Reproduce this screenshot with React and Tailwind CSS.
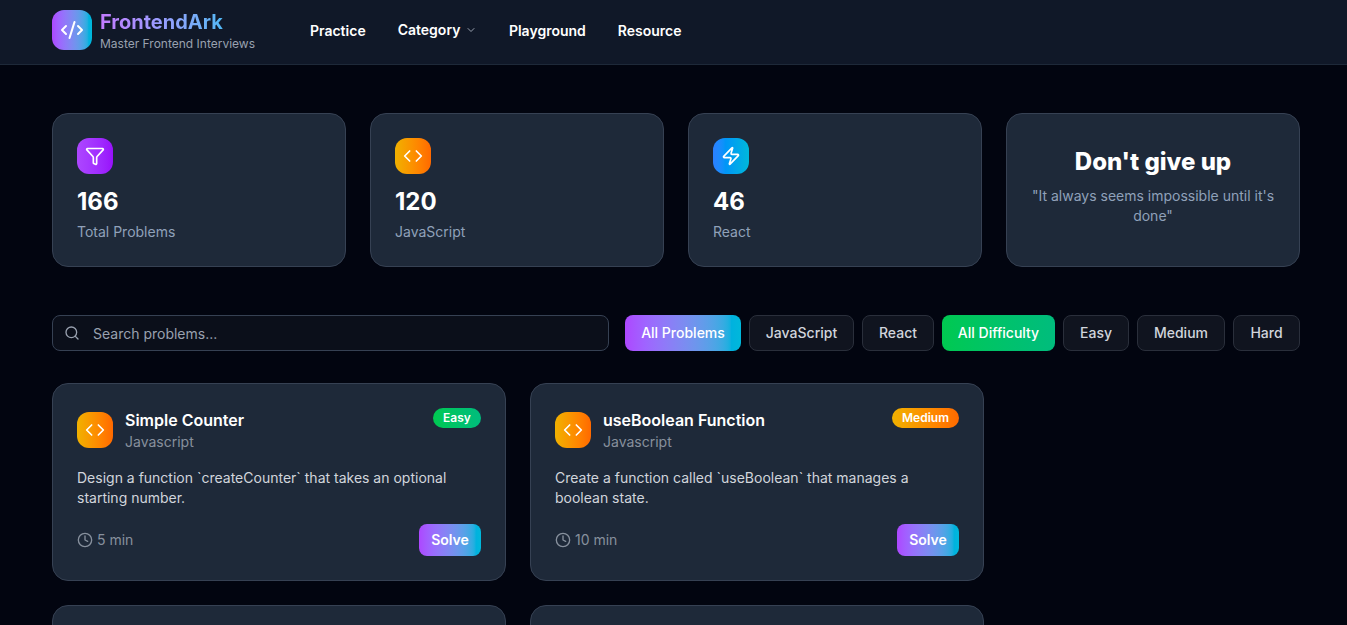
import { Search, ChevronDown, Funnel, Code, Zap, Clock, CodeXml } from 'lucide-react';

const stats = [
  { value: '166', label: 'Total Problems', Icon: Funnel, grad: 'from-purple-500 to-purple-600' },
  { value: '120', label: 'JavaScript', Icon: Code, grad: 'from-yellow-500 to-orange-500' },
  { value: '46', label: 'React', Icon: Zap, grad: 'from-blue-500 to-cyan-500' },
];

const filters = [
  { label: 'All Problems', cls: 'w-[116px] bg-gradient-to-r from-purple-500 to-cyan-500 bg-origin-border text-white border-transparent' },
  { label: 'JavaScript', cls: 'w-[105px]' },
  { label: 'React', cls: 'w-[72px]' },
  { label: 'All Difficulty', cls: 'w-[113px] bg-gradient-to-r from-green-500 to-emerald-500 bg-origin-border text-white border-transparent' },
  { label: 'Easy', cls: 'w-[66px]' },
  { label: 'Medium', cls: 'w-[88px]' },
  { label: 'Hard', cls: 'w-[67px]' },
];

const problems = [
  {
    title: 'Simple Counter',
    desc: 'Design a function `createCounter` that takes an optional starting number.',
    level: 'Easy',
    levelCls: 'w-[48px] bg-gradient-to-r from-green-500 to-emerald-500',
    time: '5 min',
  },
  {
    title: 'useBoolean Function',
    desc: 'Create a function called `useBoolean` that manages a boolean state.',
    level: 'Medium',
    levelCls: 'w-[67px] bg-gradient-to-r from-yellow-500 to-orange-500',
    time: '10 min',
  },
];

function ProblemCard({ p }) {
  return (
    <div className="h-[198px] rounded-2xl border border-gray-700 bg-gray-800 px-6 pt-6">
      <div className="flex justify-between">
        <div className="flex items-start gap-3 pt-[2px]">
          <div className="mt-[2px] flex h-9 w-9 items-center justify-center rounded-xl bg-gradient-to-r from-yellow-500 to-orange-500">
            <Code size={20} className="text-white" />
          </div>
          <div>
            <div className="text-base leading-5 font-semibold text-white">{p.title}</div>
            <div className="mt-[2px] text-sm leading-5 text-[#87909d]">Javascript</div>
          </div>
        </div>
        <div className={`flex h-5 items-center justify-center rounded-full text-xs font-semibold text-white ${p.levelCls}`}>
          {p.level}
        </div>
      </div>
      <p className="mt-4 text-sm leading-5 text-gray-300">{p.desc}</p>
      <div className="mt-4 flex items-center justify-between">
        <div className="flex items-center gap-1 text-sm text-[#87909d]">
          <Clock size={16} />
          {p.time}
        </div>
        <button className="h-8 w-[62px] rounded-lg bg-gradient-to-r from-purple-500 to-cyan-500 text-sm font-semibold text-white">
          Solve
        </button>
      </div>
    </div>
  );
}

export default function App() {
  return (
    <div className="h-screen overflow-hidden bg-[#020510] font-['Inter',sans-serif]">
      {/* header */}
      <header className="h-[65px] border-b border-gray-800 bg-gray-900">
        <div className="flex items-center pl-[52px]">
          <div className="mt-[10px] flex h-10 w-10 items-center justify-center self-start rounded-xl bg-gradient-to-r from-purple-500 to-cyan-500">
            <CodeXml size={24} className="text-white" />
          </div>
          <div className="ml-2 mt-[10px] self-start">
            <div className="w-fit bg-gradient-to-r from-purple-400 to-[#4fb8f5] bg-clip-text text-xl leading-6 font-bold text-transparent">
              FrontendArk
            </div>
            <div className="mt-[2px] text-xs leading-4 text-gray-400">Master Frontend Interviews</div>
          </div>
          <nav className="ml-[55px] flex h-[62px] items-center gap-8 text-sm font-semibold text-white">
            <span>Practice</span>
            <span className="-mt-[2px] flex items-center gap-1">
              Category <ChevronDown size={12} className="ml-[0.5px] text-gray-400" />
            </span>
            <span>Playground</span>
            <span>Resource</span>
          </nav>
        </div>
      </header>

      <main className="ml-[52px] w-[1248px] pt-12">
        <div className="grid grid-cols-4 gap-6">
          {stats.map(({ value, label, Icon, grad }) => (
            <div key={label} className="h-[154px] rounded-2xl border border-gray-700 bg-gray-800 px-6 pt-6">
              <div className={`flex h-9 w-9 items-center justify-center rounded-xl bg-gradient-to-r ${grad}`}>
                <Icon size={20} className="text-white" />
              </div>
              <div className="mt-3 text-2xl leading-8 font-bold text-white">{value}</div>
              <div className="mt-1 text-sm leading-5 text-slate-400">{label}</div>
            </div>
          ))}
          <div className="flex h-[154px] flex-col items-center rounded-2xl border border-gray-700 bg-gray-800 px-6 pt-[32px] text-center">
            <div className="text-2xl leading-8 font-extrabold text-white">Don't give up</div>
            <div className="mt-2 text-sm leading-5 text-slate-400">"It always seems impossible until it's done"</div>
          </div>
        </div>

        <div className="mt-12 flex items-center gap-2">
          <div className="mr-2 flex h-9 flex-1 items-center gap-2 rounded-lg border border-gray-700 bg-[#0b0f1a] px-[11px]">
            <Search size={16} className="text-gray-400" />
            <input
              className="ml-[5px] flex-1 translate-y-[1px] bg-transparent text-sm text-white outline-none placeholder:text-gray-400"
              placeholder="Search problems..."
            />
          </div>
          {filters.map((f) => (
            <button
              key={f.label}
              className={`h-9 rounded-lg border border-[#2a2f3b] text-sm font-medium text-gray-300 ${f.cls.includes('bg-') ? '' : 'bg-[#10141f]'} ${f.cls}`}
            >
              {f.label}
            </button>
          ))}
        </div>

        <div className="mt-8 grid w-[932px] grid-cols-2 gap-6">
          {problems.map((p) => (
            <ProblemCard key={p.title} p={p} />
          ))}
          <div className="h-[198px] rounded-2xl border border-gray-700 bg-gray-800" />
          <div className="h-[198px] rounded-2xl border border-gray-700 bg-gray-800" />
        </div>
      </main>
    </div>
  );
}
